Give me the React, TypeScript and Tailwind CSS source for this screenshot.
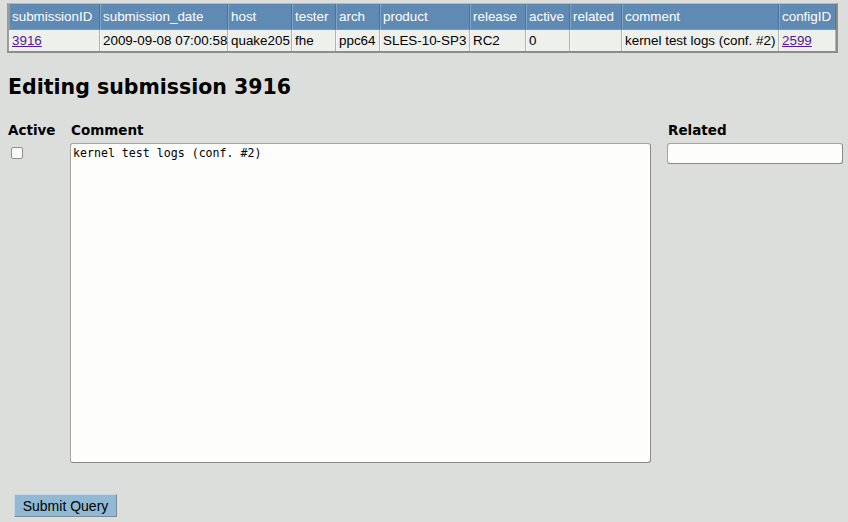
import React from 'react';

const headers = [
  'submissionID',
  'submission_date',
  'host',
  'tester',
  'arch',
  'product',
  'release',
  'active',
  'related',
  'comment',
  'configID',
];

const colWidths = [
  'w-[91px]',
  'w-[128px]',
  'w-[64px]',
  'w-[44px]',
  'w-[44px]',
  'w-[90px]',
  'w-[56px]',
  'w-[44px]',
  'w-[52px]',
  'w-[157px]',
  'w-[57px]',
];

const row = ['3916', '2009-09-08 07:00:58', 'quake205', 'fhe', 'ppc64', 'SLES-10-SP3', 'RC2', '0', '', 'kernel test logs (conf. #2)', '2599'];

export default function App() {
  return (
    <div className="min-h-[522px] w-[848px] bg-[#dcdedb] text-black font-['Liberation_Sans',Arial,sans-serif] pt-[3px]">
      <table className="ml-[7px] w-[831px] table-fixed border-separate border-spacing-0 border-l-2 border-r-2 border-b-2 border-t border-l-[#9a9a9a] border-r-[#8c8c8c] border-b-[#8c8c8c] border-t-[#9cbddb] text-[13.4px] leading-[16px]">
        <colgroup>
          {colWidths.map((w, i) => (
            <col key={i} className={w} />
          ))}
        </colgroup>
        <thead>
          <tr className="h-[26px] bg-[#5f8ab3] text-white">
            {headers.map((h) => (
              <th
                key={h}
                className="whitespace-nowrap border-b border-b-[#7d98ad] border-l border-l-[#7fa3c6] border-r border-r-[#4c7399] px-[2px] text-left font-normal"
              >
                {h}
              </th>
            ))}
          </tr>
        </thead>
        <tbody>
          <tr className="h-[21px] bg-[#eef0ec]">
            {row.map((c, i) => (
              <td
                key={i}
                className="whitespace-nowrap border-l border-l-[#f8f8f6] border-r border-r-[#b1b3b0] px-[2px] text-left"
              >
                {i === 0 || i === 10 ? (
                  <a href="#" className="text-[#551a8b] underline">
                    {c}
                  </a>
                ) : (
                  c
                )}
              </td>
            ))}
          </tr>
        </tbody>
      </table>

      <h1 className="ml-[8px] mt-[22px] font-['DejaVu_Sans',sans-serif] text-[20.5px] font-bold leading-[24px]">
        Editing submission 3916
      </h1>

      <form className="ml-[8px] mt-[20px]" onSubmit={(e) => e.preventDefault()}>
        <div className="flex items-start">
          <div className="w-[62px] flex flex-col">
            <label className="mt-[2px] font-['DejaVu_Sans',sans-serif] text-[13.5px] font-bold leading-[18px]">Active</label>
            <input
              type="checkbox"
              className="ml-[3px] mt-[8px] h-[12px] w-[12px] appearance-none rounded-[2px] border border-[#8f8f8f] bg-[#fbfbf9]"
            />
          </div>
          <div className="flex w-[581px] flex-col">
            <label className="ml-[1px] mt-[2px] font-['DejaVu_Sans',sans-serif] text-[13.5px] font-bold leading-[18px]">Comment</label>
            <textarea
              defaultValue="kernel test logs (conf. #2)"
              spellCheck={false}
              className="mt-[4px] h-[320px] w-[581px] resize-none rounded-[3px] border border-[#a4a4a4] border-b-[#8a8a8a] border-r-[#8a8a8a] bg-[#fdfdfb] px-[2px] py-[2px] font-['DejaVu_Sans_Mono',monospace] text-[11.6px] leading-[14px] outline-none"
            />
          </div>
          <div className="ml-[16px] flex w-[176px] flex-col">
            <label className="ml-[1px] mt-[2px] font-['DejaVu_Sans',sans-serif] text-[13.5px] font-bold leading-[18px]">Related</label>
            <input
              type="text"
              className="mt-[4px] h-[21px] w-[176px] rounded-[3px] border border-[#a4a4a4] border-b-[#8a8a8a] border-r-[#8a8a8a] bg-[#fdfdfb] px-[2px] text-[13px] outline-none"
            />
          </div>
        </div>
        <button
          type="submit"
          className="ml-[6px] mt-[31px] h-[23px] w-[103px] border border-[#7f8a92] border-l-[#c4d8e6] border-t-[#c4d8e6] bg-[#91b9d3] text-[14px] leading-[16px] text-black"
        >
          Submit Query
        </button>
      </form>
    </div>
  );
}
